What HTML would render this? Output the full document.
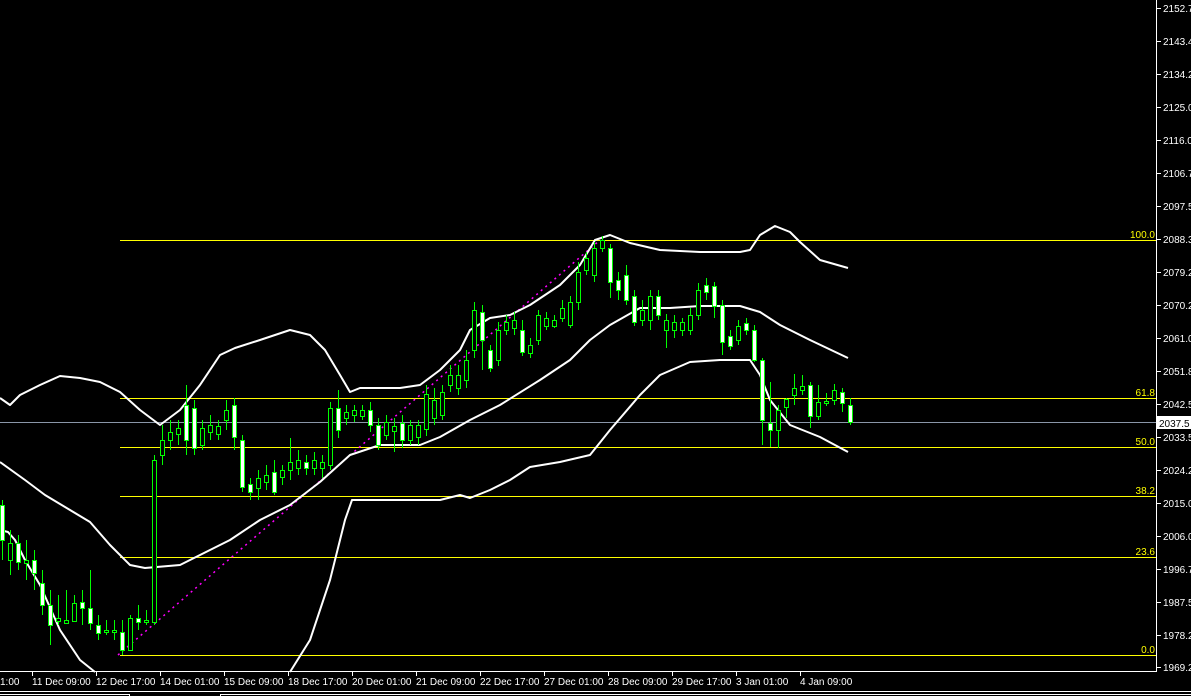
<!DOCTYPE html>
<html><head><meta charset="utf-8"><style>
html,body{margin:0;padding:0;background:#000;width:1191px;height:696px;overflow:hidden}
svg{display:block}
text{font-family:"Liberation Sans",sans-serif;font-size:10px}
</style></head><body>
<svg width="1191" height="696" viewBox="0 0 1191 696" xmlns="http://www.w3.org/2000/svg">
<rect width="1191" height="696" fill="#000"/>
<g stroke="#ffff00" stroke-width="1">
<line x1="120" y1="240.5" x2="1156" y2="240.5"/>
<line x1="120" y1="398.5" x2="1156" y2="398.5"/>
<line x1="120" y1="447.5" x2="1156" y2="447.5"/>
<line x1="120" y1="496.5" x2="1156" y2="496.5"/>
<line x1="120" y1="557.5" x2="1156" y2="557.5"/>
<line x1="120" y1="655.5" x2="1156" y2="655.5"/>
</g>
<line x1="0" y1="422.5" x2="1156" y2="422.5" stroke="#8a96a8" stroke-width="1"/>
<g fill="#ffff00" text-anchor="end">
<text x="1155" y="238">100.0</text><text x="1155" y="396">61.8</text><text x="1155" y="445">50.0</text>
<text x="1155" y="494">38.2</text><text x="1155" y="555">23.6</text><text x="1155" y="653">0.0</text>
</g>
<line x1="118" y1="655" x2="600" y2="240" stroke="#ff00ff" stroke-width="1.5" stroke-dasharray="2,4"/>
<g fill="none" stroke="#fff" stroke-width="2" stroke-linejoin="round">
<polyline points="0,398 10,405 20,395 40,385 60,376 80,378 100,382 120,392 140,410 160,425 180,410 200,385 220,355 235,348 260,340 290,330 310,335 325,350 340,375 350,392 360,388 380,388 400,388 420,385 440,370 460,350 470,330 490,318 510,315 530,305 560,285 580,265 595,240 610,235 630,243 660,250 700,252 740,252 750,250 760,235 775,226 790,232 800,242 820,260 848,268"/>
<polyline points="0,462 25,480 45,495 70,510 90,522 110,545 130,565 145,568 180,565 200,555 230,540 260,520 290,505 320,482 350,455 380,445 420,445 440,437 470,420 500,405 540,380 570,360 590,340 610,325 640,308 670,308 700,306 740,306 760,312 780,325 810,340 848,358"/>
<polyline points="0,530 8,532 15,540 25,560 40,585 60,630 80,660 95,672"/>
<polyline points="290,672 310,640 330,580 345,520 352,500 380,500 440,500 460,495 470,498 490,490 510,480 530,467 560,462 590,455 610,430 640,395 660,375 690,362 720,360 750,360 760,375 770,400 790,425 820,437 848,452"/>
</g>
<g stroke="#00ff00" stroke-width="1">
<path fill="none" d="M2.5 500V560M10.5 530V575M18.5 535V570M26.5 540V580M34.5 550V590M42.5 570V615M50.5 590V645M58.5 595V625M66.5 590V620M74.5 595V615M82.5 590V625M90.5 570V630M98.5 615V640M106.5 620V635M114.5 620V640M122.5 620V655M130.5 615V645M138.5 605V630M146.5 610V625M154.5 455V625M162.5 425V465M170.5 420V450M178.5 420V445M186.5 385V455M194.5 400V455M202.5 420V450M210.5 415V440M218.5 420V440M226.5 400V430M234.5 398V450M242.5 435V492M250.5 478V500M258.5 470V500M266.5 465V490M274.5 460V495M282.5 465V485M290.5 438V480M298.5 450V475M306.5 455V475M314.5 452V475M322.5 455V478M330.5 402V470M338.5 390V438M346.5 405V425M354.5 405V422M362.5 405V420M370.5 402V432M378.5 418V450M386.5 415V440M394.5 418V452M402.5 415V448M410.5 420V445M418.5 420V445M426.5 385V436M434.5 388V425M442.5 385V420M450.5 365V392M458.5 365V395M466.5 350V388M474.5 302V358M482.5 305V370M490.5 345V372M498.5 322V366M506.5 315V335M514.5 312V335M522.5 320V356M530.5 338V358M538.5 310V345M546.5 312V330M554.5 315V328M562.5 300V322M570.5 296V328M578.5 262V310M586.5 252V275M594.5 242V282M602.5 236V252M610.5 244V298M618.5 272V300M626.5 265V305M634.5 290V326M642.5 300V326M650.5 290V330M658.5 290V320M666.5 314V348M674.5 315V338M682.5 318V336M690.5 308V335M698.5 283V320M706.5 278V300M714.5 282V318M722.5 300V355M730.5 330V350M738.5 320V345M746.5 318V335M754.5 325V362M762.5 358V445M770.5 382V447M778.5 405V448M786.5 398V418M794.5 374V405M802.5 375V395M810.5 382V428M818.5 385V420M826.5 393V406M834.5 384V405M842.5 388V412M850.5 398V425"/>
<g fill="#fff">
<rect x="0.5" y="505.5" width="4" height="35"/><rect x="16.5" y="543.5" width="4" height="19"/><rect x="32.5" y="560.5" width="4" height="13"/><rect x="40.5" y="583.5" width="4" height="22"/><rect x="48.5" y="605.5" width="4" height="20"/><rect x="80.5" y="602.5" width="4" height="6"/><rect x="88.5" y="608.5" width="4" height="15"/><rect x="96.5" y="625.5" width="4" height="8"/><rect x="120.5" y="632.5" width="4" height="18"/><rect x="136.5" y="618.5" width="4" height="4"/>
<rect x="184.5" y="405.5" width="4" height="35"/><rect x="192.5" y="408.5" width="4" height="40"/><rect x="232.5" y="405.5" width="4" height="32"/><rect x="240.5" y="440.5" width="4" height="47"/><rect x="248.5" y="484.5" width="4" height="8"/><rect x="272.5" y="472.5" width="4" height="20"/><rect x="304.5" y="462.5" width="4" height="6"/><rect x="336.5" y="408.5" width="4" height="22"/><rect x="368.5" y="410.5" width="4" height="15"/><rect x="376.5" y="425.5" width="4" height="20"/><rect x="400.5" y="423.5" width="4" height="17"/>
<rect x="480.5" y="312.5" width="4" height="28"/><rect x="488.5" y="350.5" width="4" height="18"/><rect x="520.5" y="330.5" width="4" height="22"/><rect x="608.5" y="248.5" width="4" height="34"/><rect x="616.5" y="280.5" width="4" height="10"/><rect x="624.5" y="275.5" width="4" height="25"/><rect x="632.5" y="296.5" width="4" height="26"/><rect x="656.5" y="296.5" width="4" height="19"/><rect x="704.5" y="285.5" width="4" height="7"/><rect x="712.5" y="286.5" width="4" height="20"/><rect x="720.5" y="305.5" width="4" height="37"/><rect x="728.5" y="336.5" width="4" height="10"/><rect x="744.5" y="323.5" width="4" height="7"/><rect x="752.5" y="330.5" width="4" height="30"/><rect x="760.5" y="360.5" width="4" height="60"/><rect x="768.5" y="423.5" width="4" height="7"/><rect x="808.5" y="385.5" width="4" height="31"/><rect x="840.5" y="392.5" width="4" height="11"/><rect x="848.5" y="405.5" width="4" height="17"/>
</g>
<g fill="#000">
<rect x="8.5" y="543.5" width="4" height="17"/><rect x="24.5" y="560.5" width="4" height="3"/><rect x="56.5" y="618.5" width="4" height="3"/><rect x="64.5" y="620.5" width="4" height="3"/><rect x="72.5" y="603.5" width="4" height="18"/><rect x="104.5" y="630.5" width="4" height="2"/><rect x="112.5" y="630.5" width="4" height="2"/><rect x="128.5" y="618.5" width="4" height="32"/><rect x="144.5" y="620.5" width="4" height="2"/><rect x="152.5" y="460.5" width="4" height="162"/>
<rect x="160.5" y="440.5" width="4" height="15"/><rect x="168.5" y="432.5" width="4" height="8"/><rect x="176.5" y="428.5" width="4" height="6"/><rect x="200.5" y="428.5" width="4" height="17"/><rect x="208.5" y="425.5" width="4" height="7"/><rect x="216.5" y="426.5" width="4" height="8"/><rect x="224.5" y="410.5" width="4" height="10"/><rect x="256.5" y="478.5" width="4" height="10"/><rect x="264.5" y="475.5" width="4" height="7"/><rect x="280.5" y="470.5" width="4" height="7"/><rect x="288.5" y="462.5" width="4" height="8"/><rect x="296.5" y="460.5" width="4" height="8"/><rect x="312.5" y="460.5" width="4" height="8"/><rect x="320.5" y="462.5" width="4" height="6"/><rect x="328.5" y="408.5" width="4" height="57"/><rect x="344.5" y="412.5" width="4" height="6"/><rect x="352.5" y="410.5" width="4" height="5"/><rect x="360.5" y="410.5" width="4" height="6"/><rect x="384.5" y="422.5" width="4" height="13"/><rect x="392.5" y="426.5" width="4" height="5"/><rect x="408.5" y="425.5" width="4" height="15"/><rect x="416.5" y="425.5" width="4" height="12"/><rect x="424.5" y="394.5" width="4" height="35"/><rect x="432.5" y="400.5" width="4" height="18"/><rect x="440.5" y="392.5" width="4" height="23"/><rect x="448.5" y="375.5" width="4" height="10"/><rect x="456.5" y="375.5" width="4" height="13"/><rect x="464.5" y="360.5" width="4" height="20"/><rect x="472.5" y="310.5" width="4" height="40"/><rect x="496.5" y="330.5" width="4" height="30"/><rect x="504.5" y="322.5" width="4" height="8"/><rect x="512.5" y="320.5" width="4" height="8"/><rect x="528.5" y="345.5" width="4" height="8"/><rect x="536.5" y="315.5" width="4" height="25"/><rect x="544.5" y="318.5" width="4" height="8"/><rect x="552.5" y="320.5" width="4" height="6"/><rect x="560.5" y="308.5" width="4" height="10"/><rect x="568.5" y="302.5" width="4" height="23"/><rect x="576.5" y="272.5" width="4" height="30"/><rect x="584.5" y="258.5" width="4" height="12"/><rect x="592.5" y="248.5" width="4" height="27"/><rect x="600.5" y="240.5" width="4" height="8"/><rect x="640.5" y="310.5" width="4" height="10"/><rect x="648.5" y="296.5" width="4" height="24"/><rect x="664.5" y="320.5" width="4" height="10"/><rect x="672.5" y="322.5" width="4" height="8"/><rect x="680.5" y="322.5" width="4" height="8"/><rect x="688.5" y="315.5" width="4" height="15"/><rect x="696.5" y="290.5" width="4" height="25"/><rect x="736.5" y="326.5" width="4" height="14"/><rect x="776.5" y="410.5" width="4" height="20"/><rect x="784.5" y="399.5" width="4" height="8"/><rect x="792.5" y="388.5" width="4" height="7"/><rect x="800.5" y="386.5" width="4" height="4"/><rect x="816.5" y="402.5" width="4" height="14"/><rect x="824.5" y="401.5" width="4" height="2"/><rect x="832.5" y="390.5" width="4" height="10"/>
</g>
</g>
<line x1="1156.5" y1="0" x2="1156.5" y2="672" stroke="#fff"/>
<line x1="0" y1="671.5" x2="1157" y2="671.5" stroke="#fff"/>
<g stroke="#fff">
<path d="M1157 8.5h4M1157 41.5h4M1157 74.5h4M1157 107.5h4M1157 140.5h4M1157 173.5h4M1157 206.5h4M1157 239.5h4M1157 272.5h4M1157 305.5h4M1157 338.5h4M1157 371.5h4M1157 404.5h4M1157 437.5h4M1157 470.5h4M1157 503.5h4M1157 536.5h4M1157 569.5h4M1157 602.5h4M1157 635.5h4M1157 667.5h4"/>
<path d="M32.5 672v4M96.5 672v4M160.5 672v4M224.5 672v4M288.5 672v4M352.5 672v4M416.5 672v4M480.5 672v4M544.5 672v4M608.5 672v4M672.5 672v4M736.5 672v4M800.5 672v4"/>
</g>
<g fill="#fff">
<text x="1163" y="12">2152.7</text><text x="1163" y="45">2143.4</text><text x="1163" y="78">2134.2</text><text x="1163" y="111">2125.0</text><text x="1163" y="144">2116.0</text><text x="1163" y="177">2106.7</text><text x="1163" y="210">2097.5</text><text x="1163" y="243">2088.3</text><text x="1163" y="276">2079.2</text><text x="1163" y="309">2070.2</text><text x="1163" y="342">2061.0</text><text x="1163" y="375">2051.8</text><text x="1163" y="408">2042.5</text><text x="1163" y="441">2033.5</text><text x="1163" y="474">2024.2</text><text x="1163" y="507">2015.0</text><text x="1163" y="540">2006.0</text><text x="1163" y="573">1996.7</text><text x="1163" y="606">1987.5</text><text x="1163" y="639">1978.2</text><text x="1163" y="671">1969.2</text>
</g>
<rect x="1157" y="416" width="34" height="13" fill="#fff"/>
<text x="1159" y="427" fill="#000">2037.5</text>
<g fill="#fff">
<text x="0" y="685">1:00</text><text x="32" y="685">11 Dec 09:00</text><text x="96" y="685">12 Dec 17:00</text><text x="160" y="685">14 Dec 01:00</text><text x="224" y="685">15 Dec 09:00</text><text x="288" y="685">18 Dec 17:00</text><text x="352" y="685">20 Dec 01:00</text><text x="416" y="685">21 Dec 09:00</text><text x="480" y="685">22 Dec 17:00</text><text x="544" y="685">27 Dec 01:00</text><text x="608" y="685">28 Dec 09:00</text><text x="672" y="685">29 Dec 17:00</text><text x="736" y="685">3 Jan 01:00</text><text x="800" y="685">4 Jan 09:00</text>
</g>
<path d="M0 691.5H1191" stroke="#fff"/>
<path d="M0 694.5H129.5V696M220.5 696V694.5H1191" stroke="#fff" fill="none"/>
</svg>
</body></html>
